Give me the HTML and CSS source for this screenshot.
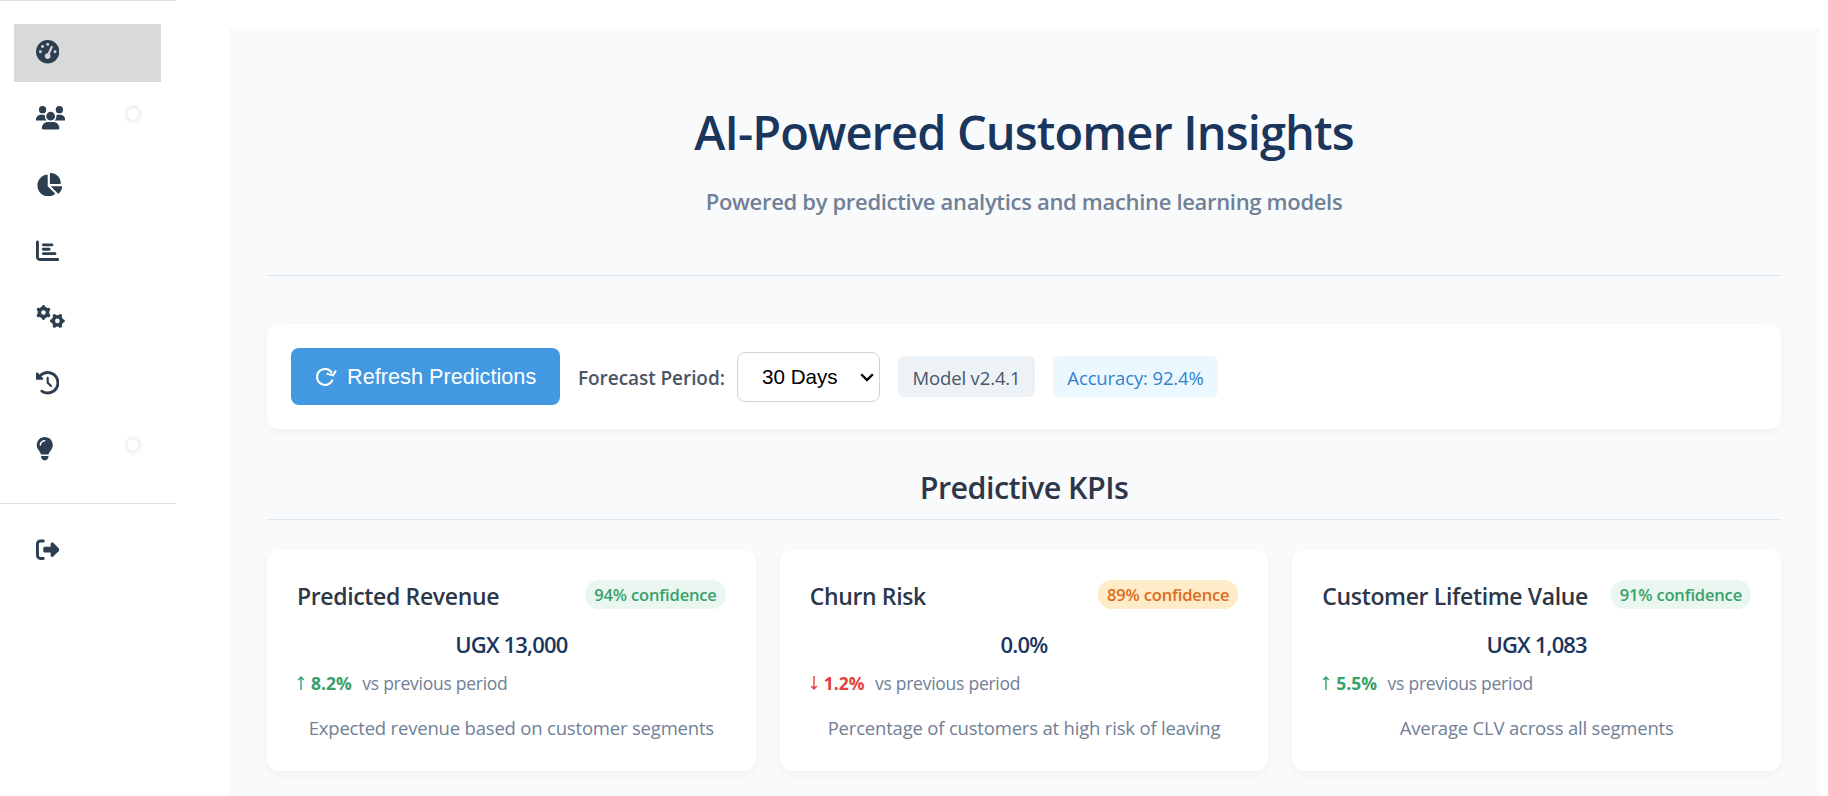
FILE: index.html
```html
<!DOCTYPE html>
<html lang="en">
<head>
<meta charset="utf-8">
<title>AI-Powered Customer Insights</title>
<link rel="stylesheet" href="styles.css">
</head>
<body>
<div class="app">
  <aside class="sidebar">
    <nav class="nav">
      <a class="nav-item active"><svg class="icon" viewBox="0 0 512 512"><path d="M0 256a256 256 0 1 1 512 0A256 256 0 1 1 0 256zM288 96a32 32 0 1 0 -64 0 32 32 0 1 0 64 0zM256 416c35.3 0 64-28.7 64-64c0-17.4-6.9-33.1-18.1-44.6L366 161.7c5.3-12.1-.2-26.3-12.3-31.6s-26.3 .2-31.6 12.3L257.9 288c-.6 0-1.3 0-1.9 0c-35.3 0-64 28.7-64 64s28.7 64 64 64zM176 144a32 32 0 1 0 -64 0 32 32 0 1 0 64 0zM96 288a32 32 0 1 0 0-64 32 32 0 1 0 0 64zm352-32a32 32 0 1 0 -64 0 32 32 0 1 0 64 0z"/></svg></a>
      <a class="nav-item"><svg class="icon" viewBox="0 0 640 512"><path d="M144 0a80 80 0 1 1 0 160A80 80 0 1 1 144 0zM512 0a80 80 0 1 1 0 160A80 80 0 1 1 512 0zM0 298.7C0 239.8 47.8 192 106.7 192h42.7c15.9 0 31 3.5 44.6 9.7c-1.3 7.2-1.9 14.7-1.9 22.3c0 38.2 16.8 72.5 43.3 96c-.2 0-.4 0-.7 0H21.3C9.6 320 0 310.4 0 298.7zM405.3 320c-.2 0-.4 0-.7 0c26.6-23.5 43.3-57.8 43.3-96c0-7.6-.7-15-1.9-22.3c13.6-6.3 28.7-9.7 44.6-9.7h42.7C592.2 192 640 239.8 640 298.7c0 11.8-9.6 21.3-21.3 21.3H405.3zM224 224a96 96 0 1 1 192 0 96 96 0 1 1 -192 0zM128 485.3C128 411.7 187.7 352 261.3 352H378.7C452.3 352 512 411.7 512 485.3c0 14.7-11.9 26.7-26.7 26.7H154.7c-14.7 0-26.7-11.9-26.7-26.7z"/></svg><span class="dot"></span></a>
      <a class="nav-item"><svg class="icon" viewBox="0 0 576 512"><path d="M304 240V16.6c0-9 7-16.6 16-16.6C443.7 0 544 100.3 544 224c0 9-7.6 16-16.6 16H304zM32 272C32 150.7 122.1 50.3 239 34.3c9.2-1.3 17 6.1 17 15.4V288L412.5 444.5c6.7 6.7 6.2 17.7-1.5 23.1C371.8 495.6 323.8 512 272 512C139.5 512 32 404.6 32 272zm526.4 16c9.3 0 16.6 7.8 15.4 17c-7.7 55.9-34.6 105.6-73.9 142.3c-6 5.6-15.4 5.2-21.2-.7L320 288H558.4z"/></svg></a>
      <a class="nav-item"><svg class="icon" viewBox="0 0 512 512"><path d="M32 32c17.7 0 32 14.3 32 32V400c0 8.8 7.2 16 16 16H480c17.7 0 32 14.3 32 32s-14.3 32-32 32H80c-44.2 0-80-35.8-80-80V64C0 46.3 14.3 32 32 32zm96 96c0-17.7 14.3-32 32-32l192 0c17.7 0 32 14.3 32 32s-14.3 32-32 32H160c-17.7 0-32-14.3-32-32zm32 64H288c17.7 0 32 14.3 32 32s-14.3 32-32 32H160c-17.7 0-32-14.3-32-32s14.3-32 32-32zm0 96H416c17.7 0 32 14.3 32 32s-14.3 32-32 32H160c-17.7 0-32-14.3-32-32s14.3-32 32-32z"/></svg></a>
      <a class="nav-item"><svg class="icon gears" viewBox="0 0 640 512"><g transform="translate(164 164)"><circle r="90"/><path d="M0-100V-128M0 100V128M87-50L113-65M-87-50L-113-65M87 50L113 65M-87 50L-113 65"/></g><g transform="translate(468 348)"><circle r="90"/><path d="M-100 0H-128M100 0H128M-50 87L-65 113M-50-87L-65-113M50 87L65 113M50-87L65-113"/></g></svg></a>
      <a class="nav-item"><svg class="icon" viewBox="0 0 512 512"><path d="M75 75L41 41C25.9 25.9 0 36.6 0 57.9V168c0 13.3 10.7 24 24 24H134.1c21.4 0 32.1-25.9 17-41l-30.8-30.8C155 85.5 203 64 256 64c106 0 192 86 192 192s-86 192-192 192c-40.8 0-78.6-12.7-109.7-34.4c-14.5-10.1-34.4-6.6-44.6 7.9s-6.6 34.4 7.9 44.6C151.2 495 201.7 512 256 512c141.4 0 256-114.6 256-256S397.4 0 256 0C185.3 0 121.3 28.7 75 75zm181 53c-13.3 0-24 10.7-24 24V256c0 6.4 2.5 12.5 7 17l72 72c9.4 9.4 24.6 9.4 33.9 0s9.4-24.6 0-33.9l-65-65V152c0-13.3-10.7-24-24-24z"/></svg></a>
      <a class="nav-item"><svg class="icon" viewBox="0 0 384 512"><path d="M272 384c9.6-31.9 29.5-59.1 49.2-86.2l0 0c5.2-7.1 10.4-14.2 15.4-21.4c19.8-28.5 31.4-63 31.4-100.3C368 78.8 289.2 0 192 0S16 78.8 16 176c0 37.3 11.6 71.9 31.4 100.3c5 7.2 10.2 14.3 15.4 21.4l0 0c19.8 27.1 39.7 54.4 49.2 86.2H272zM192 512c44.2 0 80-35.8 80-80V416H112v16c0 44.2 35.8 80 80 80zM112 176c0 8.8-7.2 16-16 16s-16-7.2-16-16c0-61.9 50.1-112 112-112c8.8 0 16 7.2 16 16s-7.2 16-16 16c-44.2 0-80 35.8-80 80z"/></svg><span class="dot"></span></a>
    </nav>
    <div class="nav-footer">
      <a class="nav-item"><svg class="icon" viewBox="0 0 512 512"><path d="M377.9 105.9L500.7 228.7c7.2 7.2 11.3 17.1 11.3 27.3s-4.1 20.1-11.3 27.3L377.9 406.1c-6.4 6.4-15 9.9-24 9.9c-18.7 0-33.9-15.2-33.9-33.9l0-62.1-128 0c-17.7 0-32-14.3-32-32l0-64c0-17.7 14.3-32 32-32l128 0 0-62.1c0-18.7 15.2-33.9 33.9-33.9c9 0 17.6 3.6 24 9.9zM160 96L96 96c-17.7 0-32 14.3-32 32l0 256c0 17.7 14.3 32 32 32l64 0c17.7 0 32 14.3 32 32s-14.3 32-32 32l-64 0c-53 0-96-43-96-96L0 128C0 75 43 32 96 32l64 0c17.7 0 32 14.3 32 32s-14.3 32-32 32z"/></svg></a>
    </div>
  </aside>

  <main class="main">
    <header class="header">
      <h1 class="title">AI-Powered Customer Insights</h1>
      <p class="subtitle">Powered by predictive analytics and machine learning models</p>
    </header>

    <section class="toolbar">
      <button class="refresh"><svg class="refresh-icon" viewBox="0 0 22 20"><path d="M17.6 12.5A8 8 0 1 1 17 6"/><path d="M11.5 6.6L18 8.4L21 3.4"/></svg><span>Refresh Predictions</span></button>
      <div class="period">
        <label class="period-label" for="period">Forecast Period:</label>
        <div class="select-wrap">
          <select class="period-select" id="period"><option>30 Days</option><option>60 Days</option><option>90 Days</option></select>
          <svg class="chevron" viewBox="0 0 14 9"><path d="M1.2 1.2L7 7L12.8 1.2"/></svg>
        </div>
      </div>
      <span class="tag tag-model">Model v2.4.1</span>
      <span class="tag tag-accuracy">Accuracy: 92.4%</span>
    </section>

    <h2 class="section-title"><span>Predictive KPIs</span></h2>

    <section class="cards">
      <article class="card">
        <div class="card-head"><h3 class="card-title">Predicted Revenue</h3><span class="badge high">94% confidence</span></div>
        <div class="value">UGX 13,000</div>
        <div class="trend"><span class="change up"><svg class="arrow" viewBox="0 0 8 14"><path d="M4 14V1M1.2 4L4 1L6.8 4"/></svg>8.2%</span><span class="versus">vs previous period</span></div>
        <p class="desc">Expected revenue based on customer segments</p>
      </article>
      <article class="card">
        <div class="card-head"><h3 class="card-title">Churn Risk</h3><span class="badge medium">89% confidence</span></div>
        <div class="value">0.0%</div>
        <div class="trend"><span class="change down"><svg class="arrow" viewBox="0 0 8 14"><path d="M4 0V13M1.2 10L4 13L6.8 10"/></svg>1.2%</span><span class="versus">vs previous period</span></div>
        <p class="desc">Percentage of customers at high risk of leaving</p>
      </article>
      <article class="card">
        <div class="card-head"><h3 class="card-title">Customer Lifetime Value</h3><span class="badge high">91% confidence</span></div>
        <div class="value">UGX 1,083</div>
        <div class="trend"><span class="change up"><svg class="arrow" viewBox="0 0 8 14"><path d="M4 14V1M1.2 4L4 1L6.8 4"/></svg>5.5%</span><span class="versus">vs previous period</span></div>
        <p class="desc">Average CLV across all segments</p>
      </article>
    </section>
  </main>
</div>
</body>
</html>
```
FILE: styles.css
```css
* { box-sizing: border-box; margin: 0; padding: 0; }
body { background: #fff; font-family: "Open Sans", "Noto Sans", sans-serif; color: #2d3748; overflow: hidden; }
.app { display: flex; height: 796px; padding-right: 8px; }

.sidebar { width: 176px; margin-right: 53px; flex: none; border-top: 1px solid #dedede; }
.nav { display: flex; flex-direction: column; gap: 8.2px; padding: 23px 15px 24px 14px; }
.nav-item { position: relative; display: flex; align-items: center; height: 58px; padding-left: 22px; }
.nav-item.active { background: #d9d9d9; }
.icon { height: 23.4px; width: auto; fill: #2c3e50; margin-bottom: 2px; }
.gears { fill: none; stroke: #2c3e50; stroke-width: 78; }
.gears path { stroke-width: 72; stroke-linecap: round; }
.dot { position: absolute; top: 18px; left: 113px; width: 12px; height: 12px; border-radius: 50%; background: #fff; box-shadow: 0 0 5px rgba(0, 0, 0, .2); }
.nav-footer { border-top: 1px solid #dedede; padding: 18px 15px 0 14px; }

.main { flex: 1; margin-top: 28px; padding: 38px 39px 0 38px; background: #f8fafc; }
.header { height: 210px; border-bottom: 1px solid #e2e8f0; text-align: center; padding-top: 34px; }
.title { font-size: 47px; line-height: 64px; font-weight: 600; color: #1a365d; letter-spacing: -.88px; }
.subtitle { margin-top: 22px; font-size: 22px; line-height: 30px; font-weight: 600; color: #718096; letter-spacing: -.32px; }

.toolbar { display: flex; align-items: center; height: 105px; margin-top: 48px; padding: 0 24px; background: #fff; border-radius: 12px; box-shadow: 0 4px 8px rgba(0, 0, 0, .04); }
.refresh { display: flex; align-items: center; gap: 10px; width: 269px; height: 57px; padding-left: 24px; border: 0; border-radius: 8px; background: #4299e1; color: #fff; font: 21.7px "Liberation Sans", sans-serif; white-space: nowrap; }
.refresh-icon { width: 22px; height: 20px; fill: none; stroke: #fff; stroke-width: 2; }
.period { display: flex; align-items: center; margin-left: 18px; }
.period-label { width: 159px; padding-top: 2px; font-size: 19px; line-height: 26px; font-weight: 600; color: #4a5568; letter-spacing: -.06px; white-space: nowrap; }
.select-wrap { position: relative; }
.period-select { display: block; appearance: none; width: 143px; height: 50px; padding: 0 24px; border: 1px solid #cbd5e0; border-radius: 8px; background: #fff; color: #000; font: 20.6px "Liberation Sans", sans-serif; }
.chevron { position: absolute; top: 21px; right: 6px; width: 14px; height: 9px; fill: none; stroke: #000; stroke-width: 2.3; pointer-events: none; }
.tag { display: flex; align-items: center; justify-content: center; height: 41px; margin-left: 18px; padding-top: 2px; border-radius: 6px; font-size: 18.5px; letter-spacing: -.13px; white-space: nowrap; }
.tag-model { width: 137px; background: #edf2f7; color: #4a5568; }
.tag-accuracy { width: 165px; background: #ebf8ff; color: #3182ce; }

.section-title { height: 91px; padding-top: 37px; border-bottom: 1px solid #e2e8f0; text-align: center; font-size: 30.5px; line-height: 42px; font-weight: 600; color: #2d3748; letter-spacing: -.55px; }

.cards { display: grid; grid-template-columns: repeat(3, 1fr); gap: 24px; margin-top: 30px; }
.card { height: 221px; padding: 30px; background: #fff; border-radius: 12px; box-shadow: 0 4px 8px rgba(0, 0, 0, .04); white-space: nowrap; }
.card-head { display: flex; justify-content: space-between; align-items: flex-start; height: 48px; }
.card-title { font-size: 23px; line-height: 33px; font-weight: 600; color: #2d3748; letter-spacing: -.35px; }
.badge { height: 29px; padding: 0 9px; border-radius: 14px; font-size: 16.5px; line-height: 29px; font-weight: 600; letter-spacing: -.17px; }
.high { background: #e9f7f0; color: #38a169; }
.medium { background: #feebc8; color: #dd6b20; }
.value { font-size: 22px; line-height: 32px; font-weight: 600; text-align: center; color: #1a365d; letter-spacing: -.85px; }
.trend { display: flex; align-items: center; gap: 10.5px; margin-top: 10px; height: 26px; font-size: 17.5px; line-height: 26px; }
.change { display: flex; align-items: center; gap: 6px; font-weight: 700; }
.up { color: #38a169; }
.down { color: #e53e3e; }
.arrow { width: 8px; height: 14px; fill: none; stroke: currentColor; stroke-width: 1.4; }
.versus { color: #718096; letter-spacing: -.26px; }
.desc { margin-top: 19px; font-size: 18.5px; line-height: 26px; text-align: center; color: #718096; letter-spacing: -.19px; }
```
